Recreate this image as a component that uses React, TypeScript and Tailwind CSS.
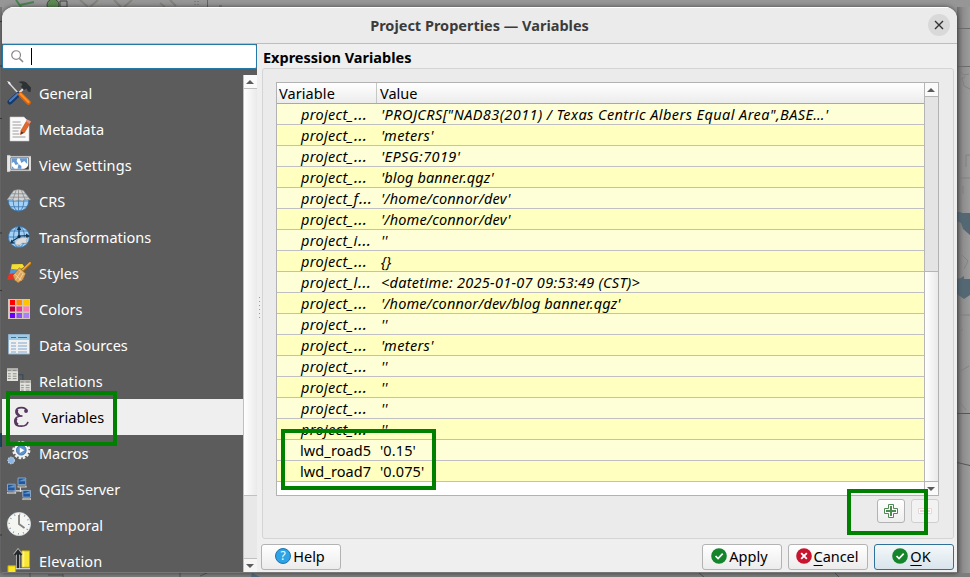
import React from "react";

const GeneralIcon = () => (
  <svg width="24" height="25" viewBox="0 0 24 25">
    <path d="M1.500 1.500L12 13" stroke="#d8d8d8" strokeWidth="1.500" />
    <path d="M0 0l3 1 1 3-2-1z" fill="#eee" />
    <path d="M16 8L12 12" stroke="#ddd" strokeWidth="2" />
    <path d="M11.500 1c4-1.500 7.500-.5 9.500 2.500l3 3-.5 4.500-2.500-.5-1.500-3-2.500 1.500-3-3 1.500-3z" fill="#2c3134" />
    <path d="M11 13.500L3 21" stroke="#16386f" strokeWidth="5" strokeLinecap="round" />
    <path d="M10.500 13L3 20" stroke="#4a7cc0" strokeWidth="2.200" strokeLinecap="round" />
    <path d="M13.500 13.500L21.500 21.500" stroke="#d9620a" strokeWidth="4.600" strokeLinecap="round" />
    <path d="M13.500 13L21.500 21" stroke="#ff9129" strokeWidth="2.200" strokeLinecap="round" />
  </svg>
);
const MetadataIcon = () => (
  <svg width="24" height="26" viewBox="0 0 24 26">
    <path d="M3 1h14l5 5v19H3z" fill="#fafafa" stroke="#c9c9c9" strokeWidth=".6" />
    <path d="M5.500 6h8M5.500 9h9M5.500 12h8M5.500 15h6M5.500 18h7M5.500 21h13" stroke="#9b9b9b" strokeWidth="1.200" />
    <path d="M20.500 3.500l3.500 2-6.500 11-4 2 .5-4z" fill="#e2692b" stroke="#b34a14" strokeWidth=".6" />
    <path d="M20.500 3.500l3.500 2-1.300 2.200-3.500-2z" fill="#d99a9a" />
    <path d="M14.300 15.500l2.400 1.300-3.200 1.700z" fill="#43352a" />
  </svg>
);
const ViewIcon = () => (
  <svg width="25" height="24" viewBox="0 0 25 24" className="relative -top-px">
    <path d="M0 3h3l1 1h21v15H3v1H0z" fill="#e7e7e7" stroke="#bbb" strokeWidth=".5" />
    <path d="M4 5.500h18.500v12H4z" fill="#fff" stroke="#555" strokeWidth=".8" />
    <path d="M5 6h6l-1 3 2 3-3 1-2-3-2 1zM13 6h8v6l-3-3-3 2zM5 14l3 3H5zM12 12l3 2v3h-4z" fill="#669bd2" />
    <path d="M22.500 12v5.500h-6c3-.500 5-2 6-5.500z" fill="#454545" />
  </svg>
);
const Globe = () => (
  <>
    <circle cx="12" cy="12" r="10.600" fill="#a4d2f7" stroke="#3771a8" strokeWidth=".8" />
    <path d="M1.500 12h21M3.500 6h17M3.500 18h17M12 1.500v21" stroke="#4279ad" strokeWidth=".9" fill="none" />
    <ellipse cx="12" cy="12" rx="5.500" ry="10.600" stroke="#4279ad" strokeWidth=".9" fill="none" />
  </>
);
const CrsIcon = () => (
  <svg width="25" height="24" viewBox="0 0 25 24">
    <Globe />
    <path d="M7 1l5-1 5 1 7.500 10-5.500-1-3 2-4-1-4 1-3-2-5 1z" fill="#d2d4d4" stroke="#8b8b8b" strokeWidth=".6" />
    <path d="M5 4.500h15M2.500 8h20M9.500 1L6 11M12 0v11M15 1l4 10" stroke="#858585" strokeWidth=".8" />
  </svg>
);
const TransformIcon = () => (
  <svg width="24" height="24" viewBox="0 0 24 24">
    <Globe />
    <path d="M12 3v9L4 17M12 11l9-.5" stroke="#173853" strokeWidth="1.200" fill="none" />
    <path d="M12 1l2.500 4h-5zM23 11l-4-2.500v5zM3 18.500l1.500-4 3 4z" fill="#193951" />
    <path d="M8 18c2-4 5.500-6.500 13-5l-2 2 1 3-4.500 0-3 2-4-.5z" fill="#ddd" stroke="#999" strokeWidth=".4" />
    <circle cx="12" cy="11.500" r="1.600" fill="#102c44" />
  </svg>
);
const StylesIcon = () => (
  <svg width="25" height="24" viewBox="0 0 25 24">
    <path d="M5 3l11-.5 2 3-6 4-8-1z" fill="#f4de32" />
    <path d="M4 7.500l9 1-2 6-8.500-1z" fill="#5b94d2" />
    <path d="M2 13l7-1 3 7-12 0z" fill="#e83324" />
    <path d="M16 9.500L24 2" stroke="#a5660c" strokeWidth="3" strokeLinecap="round" />
    <path d="M16 9L24 1.500" stroke="#f0a73c" strokeWidth="1.600" strokeLinecap="round" />
    <path d="M13 6.500l6.500 6-2.500 6-5.500 4-3.500-3-2-5z" fill="#dca35a" stroke="#8d5d20" strokeWidth=".6" />
    <path d="M12.500 8.500l5 5M8 13l7 7M14 11l-5 8M16.500 13l-4 7" stroke="#f8dfae" strokeWidth=".8" />
  </svg>
);
const ColorsIcon = () => (
  <svg width="24" height="22" viewBox="0 0 24 22">
    <path d="M1 1h22v20H1z" fill="#d2c7ba" />
    <path d="M3 2h5v5H3z" fill="#f00" /><path d="M9.500 2h5.500v5H9.500z" fill="#ff8c00" /><path d="M16.500 2h5.500v5h-5.500z" fill="#ffc400" />
    <path d="M3 8.500h5v5H3z" fill="#b5003b" /><path d="M9.500 8.500h5.500v5H9.500z" fill="#e83892" /><path d="M16.500 8.500h5.500v5h-5.500z" fill="#ff80b5" />
    <path d="M3 15h5v5H3z" fill="#6500ff" /><path d="M9.500 15h5.500v5H9.500z" fill="#8a50ff" /><path d="M16.500 15h5.500v5h-5.500z" fill="#aa80ff" />
  </svg>
);
const DataIcon = () => (
  <svg width="24" height="22" viewBox="0 0 24 22" className="relative -top-px">
    <path d="M1.500 1.500h21v19.500h-21z" fill="#f0f0f0" stroke="#8eafca" />
    <path d="M2 2h20v5H2z" fill="#9dcae7" />
    <path d="M4 4.500h5M11 4.500h9" stroke="#39749f" strokeWidth="1.200" />
    <path d="M4 10h5M11 10h9M4 13h5M11 13h9M4 16h5M11 16h9M4 19h5M11 19h9" stroke="#7ea7d2" strokeWidth="1" />
  </svg>
);
const RelationsIcon = () => (
  <svg width="25" height="25" viewBox="0 0 25 25" className="relative -top-px">
    <path d="M12 6.500h4.500V13" fill="none" stroke="#35485d" strokeWidth="1.200" />
    {[[0, 0], [13.500, 12]].map(([x, y]) => (
      <g key={x} transform={`translate(${x} ${y})`}>
        <path d="M0 0h11.500v13H0z" fill="#e2e2dd" />
        <path d="M0 0h11.500v3H0z" fill="#b9b9b4" />
        <path d="M1 2h3M6 2h4M1 5.500h3M6 5.500h4M1 8h3M6 8h4M1 10.500h3M6 10.500h4" stroke="#8a8a86" strokeWidth="1" />
      </g>
    ))}
  </svg>
);
const VariablesIcon = () => (
  <svg width="24" height="24" viewBox="0 0 24 24">
    <path d="M20 6.500C19.500 3.500 17 2.700 14.500 2.700 10.500 2.700 9 4.700 9 6.800c0 2.500 2.500 4.200 6.500 4.200-4.500 0-7.700 1.900-7.700 5.200 0 3.300 3 5 6.700 5 3.300 0 5.700-1.300 6.500-4.300" fill="none" stroke="#56375f" strokeWidth="1.700" />
    <path d="M10.300 4.500c-1.200 2.500-.3 4.500 2 5.800M9.700 13.200c-1.900 2.100-1.200 5.100 1.300 6.300" fill="none" stroke="#56375f" strokeWidth="2.400" />
    <circle cx="19" cy="6" r="1.900" fill="#56375f" />
  </svg>
);
const MacrosIcon = () => (
  <svg width="26" height="26" viewBox="0 0 26 26">
    <circle cx="15.500" cy="10" r="8.500" fill="none" stroke="#ededed" strokeWidth="2.600" strokeDasharray="2.800 1.650" />
    <circle cx="15.500" cy="10" r="7.800" fill="#f3f3f3" />
    <circle cx="15.500" cy="10" r="5.300" fill="#5f91cb" stroke="#356596" strokeWidth=".8" />
    <path d="M13.800 7l5 3-5 3z" fill="#fff" />
    <circle cx="4.500" cy="21" r="3.500" fill="#8eb5df" stroke="#bfd6ee" strokeWidth="1.200" strokeDasharray="1.500 1" />
  </svg>
);
const ServerIcon = () => (
  <svg width="25" height="24" viewBox="0 0 25 24">
    <path d="M14 10v5M7 14h10v4" stroke="#ddd" strokeWidth="1.200" fill="none" />
    {[[0, 6.500], [11, 0], [16, 13]].map(([x, y]) => (
      <g key={x} transform={`translate(${x} ${y})`}>
        <path d="M.5.500h8v7h-8z" fill="#1f57a0" stroke="#8fa9c6" />
        <path d="M1 4l7-3v3z" fill="#6796cb" />
        <path d="M0 8.500h9.500v2H0z" fill="#c6c6c1" />
        <path d="M1 9.500h7" stroke="#777" strokeWidth=".7" />
      </g>
    ))}
  </svg>
);
const TemporalIcon = () => (
  <svg width="24" height="24" viewBox="0 0 24 24" className="relative -top-px">
    <circle cx="12" cy="12" r="11.600" fill="#f5f5f1" stroke="#ddd" strokeWidth=".7" />
    <circle cx="12" cy="12" r="9.800" fill="none" stroke="#7898b9" strokeWidth="1.500" strokeDasharray="1 4.130" />
    <path d="M12 3v9l5.500 4" fill="none" stroke="#80817e" strokeWidth="1.800" />
  </svg>
);
const ElevationIcon = () => (
  <svg width="25" height="26" viewBox="0 0 25 26">
    <path d="M15.500 2.500h8v17h-8z" fill="#fae632" stroke="#c3a800" />
    <path d="M16 3h2v16h-2z" fill="#fff29a" />
    <path d="M1 18h8v8H1z" fill="#fce620" stroke="#c3a800" />
    <path d="M11.500 2.500v19M8 7l3.500-4.500L15 7" fill="none" stroke="#b4b4b4" strokeWidth="4" />
    <path d="M11.500 2.500v19M8 7l3.500-4.500L15 7" fill="none" stroke="#24282a" strokeWidth="2.200" />
    <path d="M9 21h15" stroke="#ddd" strokeWidth="1.200" />
  </svg>
);

const items = [
  { name: "General", cls: "tracking-[-0.05px]", Icon: GeneralIcon },
  { name: "Metadata", cls: "", Icon: MetadataIcon },
  { name: "View Settings", cls: "tracking-[0.17px]", Icon: ViewIcon },
  { name: "CRS", cls: "", Icon: CrsIcon },
  { name: "Transformations", cls: "", Icon: TransformIcon },
  { name: "Styles", cls: "tracking-[0.1px]", Icon: StylesIcon },
  { name: "Colors", cls: "", Icon: ColorsIcon },
  { name: "Data Sources", cls: "tracking-[-0.05px]", Icon: DataIcon },
  { name: "Relations", cls: "tracking-[0.12px]", Icon: RelationsIcon },
  { name: "Variables", cls: "", Icon: VariablesIcon },
  { name: "Macros", cls: "tracking-[-0.05px]", Icon: MacrosIcon },
  { name: "QGIS Server", cls: "tracking-[-0.1px]", Icon: ServerIcon },
  { name: "Temporal", cls: "", Icon: TemporalIcon },
  { name: "Elevation", cls: "tracking-[0.17px]", Icon: ElevationIcon },
];

const rows: [string, string, string][] = [
  ["project_…", "'PROJCRS[\"NAD83(2011) / Texas Centric Albers Equal Area\",BASE…'", "tracking-[0.43px]"],
  ["project_…", "'meters'", "tracking-[0.35px]"],
  ["project_…", "'EPSG:7019'", "tracking-[0.4px]"],
  ["project_…", "'blog banner.qgz'", "tracking-[0.13px]"],
  ["project_f…", "'/home/connor/dev'", "tracking-[0.17px]"],
  ["project_…", "'/home/connor/dev'", "tracking-[0.17px]"],
  ["project_i…", "''", ""],
  ["project_…", "{}", ""],
  ["project_l…", "<datetime: 2025-01-07 09:53:49 (CST)>", "tracking-[0.28px]"],
  ["project_…", "'/home/connor/dev/blog banner.qgz'", "tracking-[0.13px]"],
  ["project_…", "''", ""],
  ["project_…", "'meters'", "tracking-[0.35px]"],
  ["project_…", "''", ""],
  ["project_…", "''", ""],
  ["project_…", "''", ""],
  ["project_…", "''", ""],
  ["lwd_road5", "'0.15'", "-ml-px tracking-[0.1px]"],
  ["lwd_road7", "'0.075'", "-ml-px tracking-[0.1px]"],
];

const Arrow = ({ down = false }: { down?: boolean }) => (
  <svg width="8" height="4" viewBox="0 0 8 4" className="mr-px"><path d={down ? "M0 0h8L4 4z" : "M0 4h8L4 0z"} fill="#5b5b5b" /></svg>
);

// A name shortened by the narrow column ends in a slightly wider ellipsis.
const VariableName = ({ name }: { name: string }) =>
  name.endsWith("…") ? (
    <span className="w-[104px] pl-[24px] tracking-[0.3px]">{name.slice(0, -1)}<span className="ml-[0.5px] text-[17px] leading-none">…</span></span>
  ) : (
    <span className="w-[104px] pl-[23px] tracking-[0.1px]">{name}</span>
  );

const Check = () => (
  <svg width="16" height="16" viewBox="0 0 17 17" className="relative -top-px">
    <circle cx="8.500" cy="8.500" r="8.300" fill="#14852a" />
    <path d="M4.800 8.500l2.700 2.700L12.400 6" fill="none" stroke="#fff" strokeWidth="1.800" />
  </svg>
);
const Cross = () => (
  <svg width="16" height="16" viewBox="0 0 17 17" className="relative -top-px">
    <circle cx="8.500" cy="8.500" r="8.300" fill="#c8142f" />
    <path d="M5.500 5.500l6 6M11.500 5.500l-6 6" stroke="#fff" strokeWidth="2" />
  </svg>
);
const HelpIcon = () => (
  <span className="relative -top-px flex h-4 w-4 items-center justify-center rounded-full border border-[#2074ad] bg-[#2ea3e6] text-[12px] leading-none text-white">?</span>
);

const btn = "flex h-[26px] w-[80px] items-center justify-center gap-[2px] rounded-[3px] border border-[#b3b3b3] bg-linear-to-b from-white to-[#ececec]";

const Backdrop = () => (
  <svg width="970" height="577" viewBox="0 0 970 577" className="absolute inset-0">
    <defs>
      <linearGradient id="side"><stop offset="0" stopColor="#6f6f6f" /><stop offset=".5" stopColor="#8e8e8e" /><stop offset="1" stopColor="#9c9c9c" /></linearGradient>
    </defs>
    <path d="M0 0h970v577H0z" fill="#969696" />
    <path d="M957 7h13v570h-13z" fill="url(#side)" />
    <path d="M0 573h970v4H0z" fill="#7d7d7d" />
    <path d="M0 7h2v566H0z" fill="#777" />
    <path d="M16 0l5 7M20 5l14-3" stroke="#4b8450" strokeWidth="2" />
    <circle cx="53" cy="5" r="6" fill="#5d8955" stroke="#3e4a3c" />
    <path d="M60 1h7v6h-7z" fill="none" stroke="#444" />
    <path d="M80 0l8 7M98 0l-8 7M114 0l7 7M132 0l-8 7M160 3l5 4M170 0l6 6" stroke="#83837c" strokeWidth="2" />
    <path d="M195 1v5M198 1v5" stroke="#666" strokeDasharray="1 2" />
    <path d="M207.500 0v7M219 6h3" stroke="#6f5c70" />
    <path d="M957 28.500h13M957 66.500h13" stroke="#6b6b6b" />
    <path d="M959 71l5 4 5-1M958 81l7-4M962 77l2 9 6 3M966 155h4M966 155v12M957 178h13M963 186v8M962 255l6 6-4 8M958 276l5 10 7-4M958 334l5-5M957 373l12-7M958 400l8 10M958 315h12" fill="none" stroke="#7a7a7a" strokeWidth=".7" />
    <path d="M957 212h3l2 1h8v22l-7-6-2-6-4-2z" fill="#546874" />
    <path d="M957 279l4-1 3-2v3h6v16l-6 4-7-5z" fill="#546874" />
    <path d="M957 413.500h13M957 462.500l13 3" stroke="#555" />
    <path d="M0 21.500h2M0 66h2M0 118.500h2M0 233h2M0 290.500h2M0 535h2" stroke="#424242" />
    <path d="M0 433h2v14H0z" fill="#244e66" />
    <path d="M30 573v4M48 575h15M63 574v3M180 573v4M200 576l7-3M699 573l5 4M835 573l4 4" stroke="#555" />
    <path d="M252 573l8 4h-9z" fill="#506a7c" />
  </svg>
);

export default function App() {
  return (
    <div className="relative h-[577px] w-[970px] overflow-hidden font-['Noto_Sans',sans-serif] text-[14.5px] text-black">
      <Backdrop />
      <div className="relative h-full pl-[2px] pt-[7px]">
        <div className="flex h-[566px] w-[955px] flex-col overflow-hidden rounded-t-[12px] border-b border-[#777] bg-[#efefef] shadow-[0_0_5px_rgba(0,0,0,0.55)]">
          <header className="flex h-[37px] shrink-0 items-center border-b border-t border-b-[#bdbdbd] border-t-white bg-[#ebebeb] pr-[7px]">
            <h1 className="ml-[29px] flex-1 text-center text-[14.5px] font-bold text-[#3b3b3b]">
              Project Properties — Variables
            </h1>
            <span className="mb-px flex h-[22px] w-[22px] items-center justify-center rounded-full bg-[#d9d9d9]">
              <svg width="10" height="10" viewBox="0 0 10 10"><path d="M1 1l8 8M9 1L1 9" stroke="#333" strokeWidth="1.400" /></svg>
            </span>
          </header>
          <div className="flex min-h-0 flex-1">
            <aside className="flex w-[255px] shrink-0 flex-col bg-[#5c5c5c]">
              <div className="flex h-[25px] shrink-0 items-center rounded-[2px] border border-[#2479a8] bg-white pl-[8px]">
                <svg width="13" height="13" viewBox="0 0 14 14" className="mb-px"><circle cx="5.500" cy="5.500" r="4.700" fill="none" stroke="#888" strokeWidth="1.300" /><path d="M9 9l4 4" stroke="#888" strokeWidth="1.600" /></svg>
                <span className="ml-[7px] h-[17px] w-px bg-black" />
              </div>
              <div className="flex min-h-0 flex-1 pt-[6px]">
                <nav className="flex-1 overflow-hidden">
                  {items.map(({ name, cls, Icon }) => {
                    const active = name === "Variables";
                    return (
                      <div key={name} className={active ? "flex h-9 items-center bg-[#efefef] pl-[5px] text-black" : "flex h-9 items-center pl-[5px] text-white"}>
                        <span className="flex w-[24px] shrink-0 justify-center overflow-visible">
                          <Icon />
                        </span>
                        <span className={(active ? "ml-[11px] " : "ml-[8px] ") + "whitespace-nowrap pt-[2px] " + cls}>{name}</span>
                      </div>
                    );
                  })}
                </nav>
                <div className="flex w-[14px] flex-col border-l border-[#c0c0c0] bg-[#e8e8e8]">
                  <span className="flex h-[14px] items-center justify-center border-b border-[#c0c0c0] bg-[#fafafa]"><Arrow /></span>
                  <span className="h-[407px] border-b border-[#c0c0c0] bg-linear-to-r from-white to-[#eaeaea]" />
                  <span className="flex-1" />
                  <span className="flex h-[14px] items-center justify-center border-t border-[#c0c0c0] bg-[#f5f5f5]"><Arrow down /></span>
                </div>
              </div>
            </aside>
            <div className="flex w-[4px] shrink-0 flex-col items-end justify-center gap-[2px] pr-px">
              {[0, 1, 2, 3, 4, 5].map((n) => <span key={n} className="mb-px h-px w-px bg-[#999]" />)}
            </div>
            <main className="flex flex-1 flex-col">
              <h2 className="h-[24px] pl-[2px] text-[14.5px] font-bold leading-[26px]">Expression Variables</h2>
              <section className="ml-px flex h-[471px] w-[692px] flex-col rounded-[3px] border border-[#d4d4d4] bg-[#ebebeb] pl-[13px] pt-[13px]">
                <div className="flex h-[414px] w-[663px] shrink-0 border border-[#b2b2b2] bg-white">
                  <div className="min-w-0 flex-1">
                    <div className="flex h-[21px] border-b border-[#a9a9a9] bg-linear-to-b from-white to-[#ececec] leading-[21px]">
                      <span className="w-[100px] border-r border-[#c6c6c6] pl-[2px] tracking-[0.08px]">Variable</span>
                      <span className="pl-[3px]">Value</span>
                    </div>
                    {rows.map(([name, value, cls], i) => (
                      <div
                        key={i}
                        className={
                          "flex h-[21px] whitespace-pre border-b border-[#c0c0c4] leading-[20px] " +
                          (i % 2 ? "bg-[#ffffbf] " : "bg-[#ffffd7] ") + (i < 16 ? "italic" : "")
                        }
                      >
                        <VariableName name={name} />
                        <span className={cls}>{value}</span>
                      </div>
                    ))}
                  </div>
                  <div className="flex w-[14px] flex-col border-l border-[#b5b5b5] bg-[#e4e4e4]">
                    <span className="flex h-[14px] items-center justify-center border-b border-[#b5b5b5] bg-[#fafafa]"><Arrow /></span>
                    <span className="h-[174px]" />
                    <span className="flex-1 border-t border-[#b5b5b5] bg-linear-to-r from-white to-[#eaeaea]" />
                    <span className="flex h-[14px] items-center justify-center border-t border-[#b5b5b5] bg-[#fafafa]"><Arrow down /></span>
                  </div>
                </div>
                <div className="flex justify-end gap-[6px] pr-[14px] pt-[3px]">
                  <span className="flex h-[24px] w-[28px] items-center justify-center rounded-[3px] border border-[#b3b3b3] bg-linear-to-b from-white to-[#eee]">
                    <svg width="14" height="14" viewBox="0 0 14 14"><path d="M4.500.500h5v4h4v5h-4v4h-5v-4h-4v-5h4z" fill="#fff" stroke="#4e8a52" /><path d="M7 2v10M2 7h10" stroke="#4e8a52" strokeWidth="2" /></svg>
                  </span>
                  <span className="flex h-[24px] w-[28px] items-center justify-center rounded-[3px] border border-[#cfcfcf] bg-[#f2f2f2]">
                    <svg width="14" height="6" viewBox="0 0 14 6"><path d="M.5.500h13v5H.5z" fill="#fff" stroke="#e8d6d6" /><path d="M2 3h10" stroke="#e8d6d6" strokeWidth="2" /></svg>
                  </span>
                </div>
              </section>
              <footer className="flex justify-between pr-[3px] pt-[5px]">
                <div className={btn + " pr-[2px]"}><HelpIcon /><span>Help</span></div>
                <div className="flex gap-[6px]">
                  <div className={btn + " pr-[5px]"}><Check /><span className="tracking-[0.1px]">Apply</span></div>
                  <div className={btn + " pr-[2px]"}><Cross /><span className="tracking-[-0.05px]"><u className="underline-offset-[3px]">C</u>ancel</span></div>
                  <div className="flex h-[26px] w-[80px] items-center justify-center gap-[2px] rounded-[3px] border border-[#2f7198] bg-linear-to-b from-[#f4f8fa] to-[#d9e4eb] pr-[5px]"><Check /><span><u className="underline-offset-[3px]">O</u>K</span></div>
                </div>
              </footer>
            </main>
          </div>
        </div>
      </div>
      <div className="absolute left-[6px] top-[391px] h-[55px] w-[111px] border-4 border-[#008000]" />
      <div className="absolute left-[281px] top-[429px] h-[61px] w-[155px] border-4 border-[#008000]" />
      <div className="absolute left-[847px] top-[489px] h-[46px] w-[81px] border-4 border-[#008000]" />
    </div>
  );
}
